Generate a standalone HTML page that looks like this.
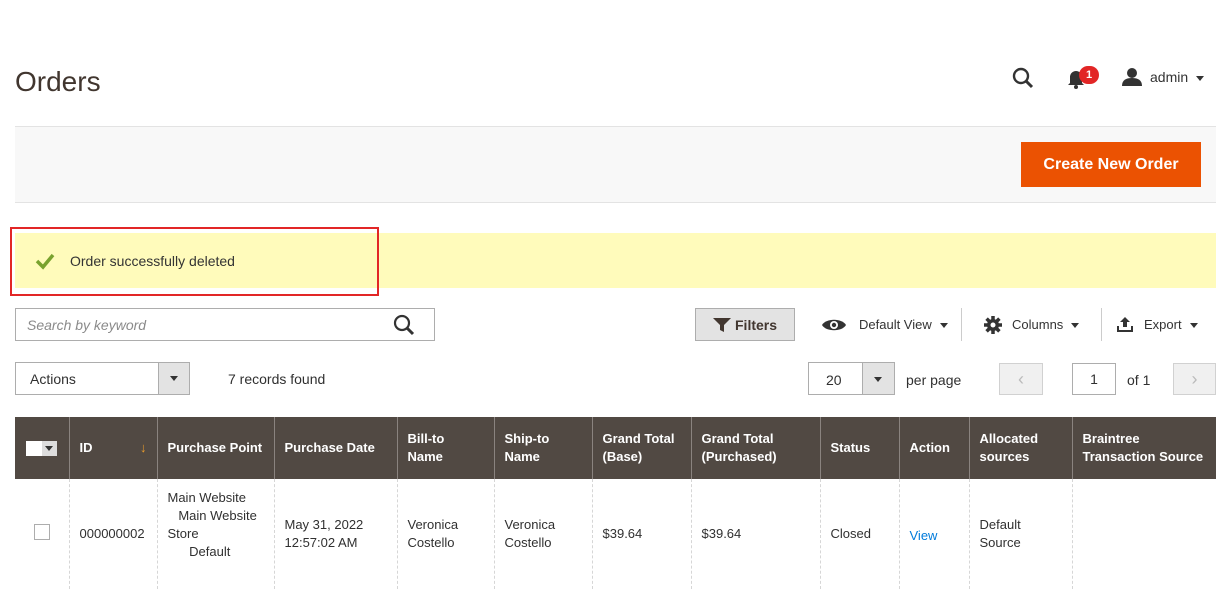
<!DOCTYPE html>
<html><head><meta charset="utf-8"><style>
*{box-sizing:border-box;margin:0;padding:0}
body{width:1219px;height:560px;overflow:hidden;background:#fff;font-family:"Liberation Sans",sans-serif;color:#303030;position:relative;font-size:14px}
.a{position:absolute}
th,td{font-size:13px}
table{border-collapse:collapse;position:absolute;left:15px;top:417px;width:1201px;table-layout:fixed}
th{background:#514943;color:#fff;text-align:left;font-weight:bold;height:62px;padding:0 10px;border-left:1px solid #8a837f;line-height:18px;vertical-align:middle}
td{height:110px;padding:0 10px;border-left:1px dashed #d6d6d6;vertical-align:middle;line-height:18px;color:#303030}
.tri{display:inline-block;border-left:4px solid transparent;border-right:4px solid transparent;border-top:5px solid #333;margin-left:8px;vertical-align:middle}
</style></head><body>
<div class="a" style="left:15px;top:66px;font-size:28px;color:#41362f">Orders</div>
<svg class="a" style="left:1012px;top:67px" width="22" height="22" viewBox="0 0 22 22"><circle cx="9" cy="9" r="7" fill="none" stroke="#333" stroke-width="2.4"/><path d="M14 14l6 6" stroke="#333" stroke-width="3"/></svg>
<svg class="a" style="left:1067px;top:69px" width="18" height="20" viewBox="0 0 18 20"><path d="M3 14V8a6 6 0 0112 0v6l2 2H1z" fill="#333"/><circle cx="9" cy="18" r="2" fill="#333"/></svg>
<div class="a" style="left:1079px;top:66px;width:20px;height:18px;border-radius:9px;background:#e22626;color:#fff;font-size:11px;font-weight:bold;text-align:center;line-height:18px">1</div>
<svg class="a" style="left:1122px;top:67px" width="20" height="20" viewBox="0 0 20 20"><circle cx="10" cy="6" r="5" fill="#333"/><path d="M0 19c0-6 4-8 10-8s10 2 10 8z" fill="#333"/></svg>
<div class="a" style="left:1150px;top:69px;font-size:14px;color:#333">admin <span class="tri" style="margin-left:4px"></span></div>
<div class="a" style="left:15px;top:126px;width:1201px;height:77px;background:#f8f8f8;border-top:1px solid #e3e3e3;border-bottom:1px solid #e3e3e3"></div>
<div class="a" style="left:1021px;top:142px;width:180px;height:45px;background:#eb5202;color:#fff;font-size:16px;font-weight:bold;text-align:center;line-height:45px">Create New Order</div>
<div class="a" style="left:15px;top:233px;width:1201px;height:55px;background:#fffbbb"></div>
<div class="a" style="left:10px;top:227px;width:369px;height:69px;border:2px solid #e22626"></div>
<svg class="a" style="left:35px;top:252px" width="20" height="18" viewBox="0 0 20 18"><path d="M2 9l6 6L18 3" fill="none" stroke="#79a22e" stroke-width="3.5"/></svg>
<div class="a" style="left:70px;top:253px;font-size:14px;color:#333">Order successfully deleted</div>
<div class="a" style="left:15px;top:308px;width:420px;height:33px;border:1px solid #adadad"></div>
<div class="a" style="left:27px;top:317px;font-size:14px;color:#8a8a8a;font-style:italic">Search by keyword</div>
<svg class="a" style="left:393px;top:314px" width="22" height="22" viewBox="0 0 22 22"><circle cx="9" cy="9" r="7" fill="none" stroke="#333" stroke-width="2.2"/><path d="M14 14l6 6" stroke="#333" stroke-width="3"/></svg>
<div class="a" style="left:695px;top:308px;width:100px;height:33px;background:#e3e3e3;border:1px solid #adadad"></div>
<svg class="a" style="left:713px;top:318px" width="18" height="14" viewBox="0 0 18 14"><path d="M0 0h18L11 7v7l-4-2V7z" fill="#41362f"/></svg>
<div class="a" style="left:735px;top:317px;font-size:14px;font-weight:bold;color:#41362f">Filters</div>
<svg class="a" style="left:822px;top:317px" width="24" height="16" viewBox="0 0 24 16"><path d="M0 8C4 1 20 1 24 8C20 15 4 15 0 8z" fill="#333"/><circle cx="12" cy="8" r="4" fill="#fff"/><circle cx="12" cy="8" r="2.2" fill="#333"/></svg>
<div class="a" style="left:859px;top:317px;font-size:13px;color:#333">Default View<span class="tri"></span></div>
<div class="a" style="left:961px;top:308px;width:1px;height:33px;background:#ccc"></div>
<svg class="a" style="left:984px;top:316px" width="18" height="18" viewBox="0 0 18 18"><circle cx="9" cy="9" r="6" fill="#333"/><g stroke="#333" stroke-width="3.5"><path d="M9 0v18M0 9h18M2.6 2.6l12.8 12.8M15.4 2.6L2.6 15.4"/></g><circle cx="9" cy="9" r="2.5" fill="#fff"/></svg>
<div class="a" style="left:1012px;top:317px;font-size:13px;color:#333">Columns<span class="tri"></span></div>
<div class="a" style="left:1101px;top:308px;width:1px;height:33px;background:#ccc"></div>
<svg class="a" style="left:1116px;top:317px" width="18" height="16" viewBox="0 0 18 16"><path d="M9 0l5 5h-3v5H7V5H4z" fill="#333"/><path d="M1 9v6h16V9h-2v4H3V9z" fill="#333"/></svg>
<div class="a" style="left:1144px;top:317px;font-size:13px;color:#333">Export<span class="tri"></span></div>
<div class="a" style="left:15px;top:362px;width:175px;height:33px;border:1px solid #adadad"></div>
<div class="a" style="left:158px;top:362px;width:32px;height:33px;background:#e3e3e3;border:1px solid #adadad"></div>
<span class="a tri" style="left:162px;top:376px"></span>
<div class="a" style="left:30px;top:371px">Actions</div>
<div class="a" style="left:228px;top:371px">7 records found</div>
<div class="a" style="left:808px;top:362px;width:87px;height:33px;border:1px solid #adadad"></div>
<div class="a" style="left:862px;top:362px;width:33px;height:33px;background:#e3e3e3;border:1px solid #adadad"></div>
<span class="a tri" style="left:866px;top:377px"></span>
<div class="a" style="left:826px;top:372px">20</div>
<div class="a" style="left:906px;top:372px">per page</div>
<div class="a" style="left:999px;top:363px;width:44px;height:32px;background:#f0f0f0;border:1px solid #d1d1d1;color:#bbb;text-align:center;line-height:30px;font-size:18px">‹</div>
<div class="a" style="left:1072px;top:363px;width:44px;height:32px;border:1px solid #adadad;text-align:center;line-height:30px">1</div>
<div class="a" style="left:1127px;top:372px">of 1</div>
<div class="a" style="left:1173px;top:363px;width:43px;height:32px;background:#f0f0f0;border:1px solid #d1d1d1;color:#bbb;text-align:center;line-height:30px;font-size:18px">›</div>
<table>
<colgroup><col style="width:54px"><col style="width:88px"><col style="width:117px"><col style="width:123px"><col style="width:97px"><col style="width:98px"><col style="width:99px"><col style="width:129px"><col style="width:79px"><col style="width:70px"><col style="width:103px"><col></colgroup>
<tr><th style="border-left:none;padding-left:11px"><span style="display:inline-block;width:16px;height:15px;background:#fff;vertical-align:middle"></span><span style="display:inline-block;width:15px;height:15px;background:#ddd;vertical-align:middle;position:relative"><span class="tri" style="position:absolute;left:-5px;top:5px"></span></span></th>
<th>ID<span style="float:right;font-weight:normal;color:#eb9b2a">↓</span></th><th>Purchase Point</th><th>Purchase Date</th><th>Bill-to<br>Name</th><th>Ship-to<br>Name</th><th>Grand Total<br>(Base)</th><th>Grand Total<br>(Purchased)</th><th>Status</th><th>Action</th><th>Allocated<br>sources</th><th>Braintree<br>Transaction Source</th></tr>
<tr><td style="border-left:none;padding-left:19px"><span style="display:inline-block;width:16px;height:16px;border:1px solid #adadad"></span></td><td>000000002</td><td style="vertical-align:top;padding-top:10px">Main Website<br>&nbsp;&nbsp;&nbsp;Main Website<br>Store<br>&nbsp;&nbsp;&nbsp;&nbsp;&nbsp;&nbsp;Default</td><td>May 31, 2022<br>12:57:02 AM</td><td>Veronica<br>Costello</td><td>Veronica<br>Costello</td><td>$39.64</td><td>$39.64</td><td>Closed</td><td style="color:#007bdb;padding-top:4px">View</td><td>Default<br>Source</td><td></td></tr>
</table>
</body></html>
